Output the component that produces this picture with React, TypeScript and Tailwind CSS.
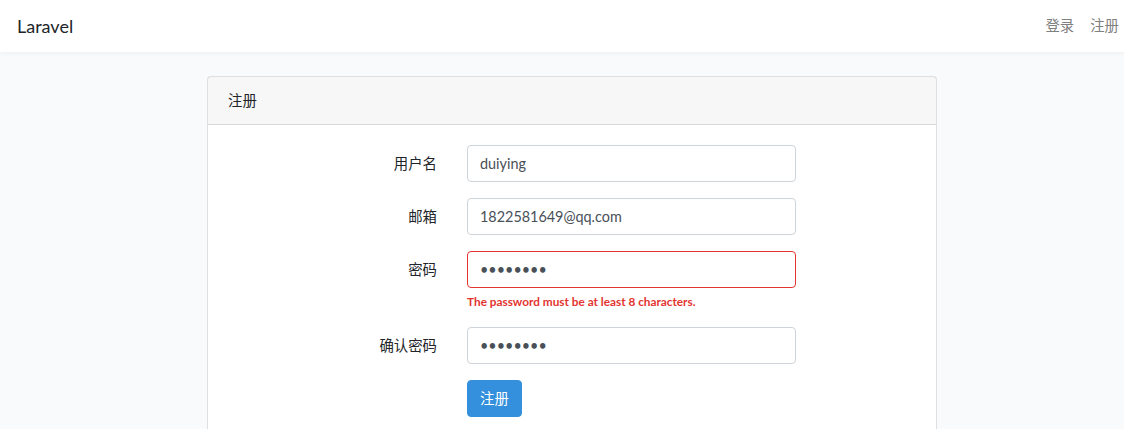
const font = { fontFamily: 'Lato, "Noto Sans CJK SC", sans-serif' };

function Row({ label, children }: { label: string; children: React.ReactNode }) {
  return (
    <div className="flex mb-4">
      <label className="w-[209px] pt-[7px] text-right text-[14.4px] leading-[23px] text-[#212529] shrink-0">
        {label}
      </label>
      <div className="ml-[30px] w-[329px]">{children}</div>
    </div>
  );
}

function Field({ value, type = 'text', invalid = false }: { value: string; type?: string; invalid?: boolean }) {
  return (
    <input
      type={type}
      defaultValue={value}
      readOnly
      className={
        'block w-full h-[37px] px-3 rounded-[4px] bg-white text-[14.4px] text-[#495057] outline-none border ' +
        (invalid ? 'border-[#e3342f]' : 'border-[#ced4da]')
      }
      style={font}
    />
  );
}

export default function App() {
  return (
    <div className="min-h-screen bg-[#f8fafc]" style={font}>
      {/* Navbar */}
      <nav className="h-[52px] bg-white shadow-[0_2px_4px_rgba(0,0,0,0.04)] flex items-center justify-between pl-[17px] pr-[5px]">
        <span className="text-[18px] text-[#212529]">Laravel</span>
        <div className="flex gap-4 text-[14.4px] text-[#808080]">
          <span>登录</span>
          <span>注册</span>
        </div>
      </nav>

      <main className="pt-6">
        <div className="ml-[207px] w-[730px] bg-white border border-[rgba(0,0,0,0.125)] rounded-[4px]">
          <div className="px-5 py-3 bg-[rgba(0,0,0,0.03)] border-b border-[rgba(0,0,0,0.125)] text-[14.4px] leading-[23px] text-[#212529]">
            注册
          </div>
          <div className="p-5">
            <Row label="用户名">
              <Field value="duiying" />
            </Row>
            <Row label="邮箱">
              <Field value="1822581649@qq.com" />
            </Row>
            <Row label="密码">
              <Field value="12345678" type="password" invalid />
              <p className="mt-1 text-[11.8px] font-bold text-[#e3342f] leading-[19px]">
                The password must be at least 8 characters.
              </p>
            </Row>
            <Row label="确认密码">
              <Field value="12345678" type="password" />
            </Row>
            <div className="flex">
              <div className="w-[209px] shrink-0" />
              <div className="ml-[30px]">
                <button className="h-[37px] px-3 rounded-[4px] bg-[#3490dc] border border-[#3490dc] text-white text-[14.4px]">
                  注册
                </button>
              </div>
            </div>
          </div>
        </div>
      </main>
    </div>
  );
}
